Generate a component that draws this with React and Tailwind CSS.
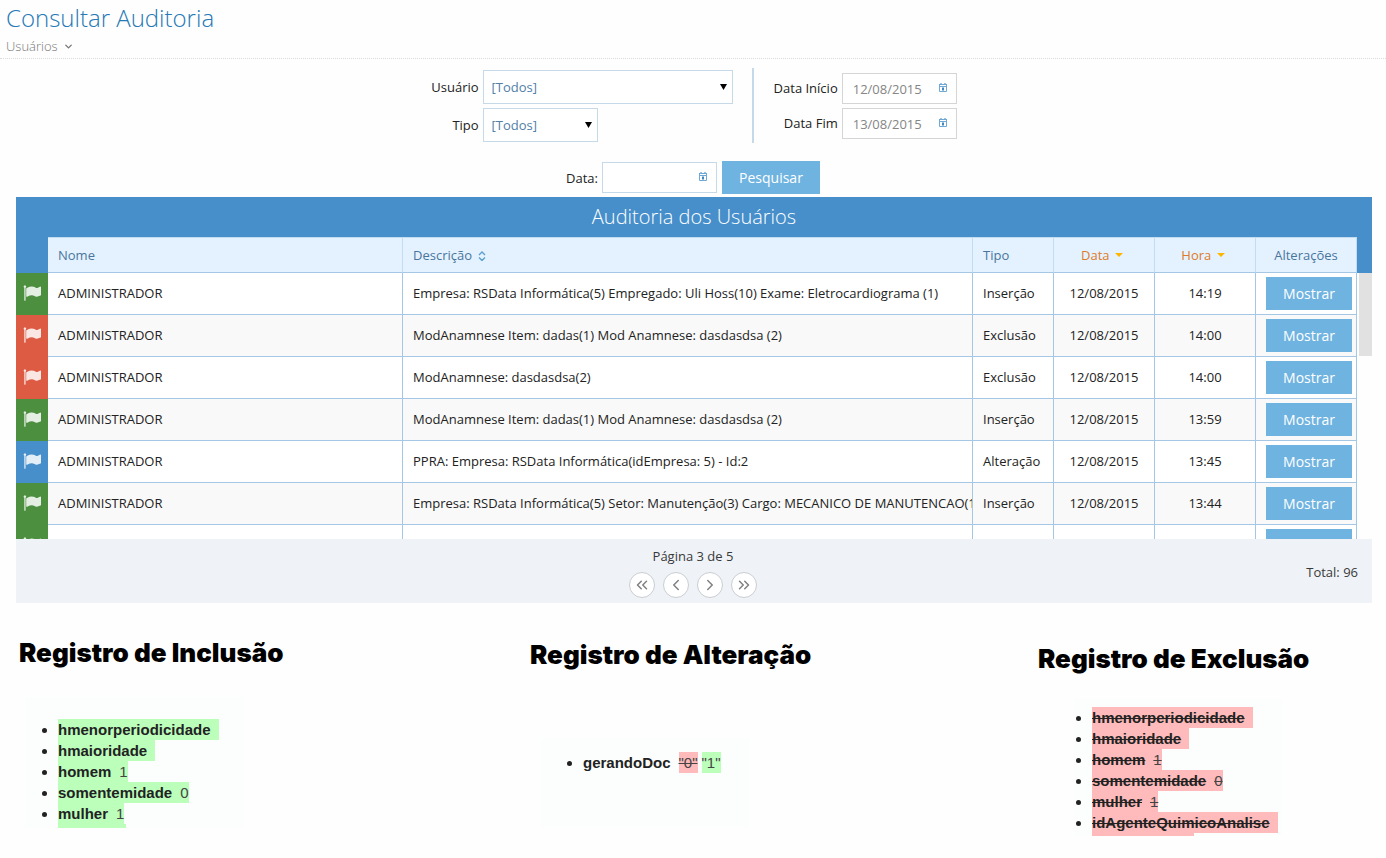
import { useState } from "react";
import { ChevronDown, ChevronLeft, ChevronRight, ChevronsLeft, ChevronsRight } from "lucide-react";

const rows = [
  { flag: "green", desc: "Empresa: RSData Informática(5) Empregado: Uli Hoss(10) Exame: Eletrocardiograma (1)", tipo: "Inserção", hora: "14:19" },
  { flag: "red", desc: "ModAnamnese Item: dadas(1) Mod Anamnese: dasdasdsa (2)", tipo: "Exclusão", hora: "14:00" },
  { flag: "red", desc: "ModAnamnese: dasdasdsa(2)", tipo: "Exclusão", hora: "14:00" },
  { flag: "green", desc: "ModAnamnese Item: dadas(1) Mod Anamnese: dasdasdsa (2)", tipo: "Inserção", hora: "13:59" },
  { flag: "blue", desc: "PPRA: Empresa: RSData Informática(idEmpresa: 5) - Id:2", tipo: "Alteração", hora: "13:45" },
  { flag: "green", desc: "Empresa: RSData Informática(5) Setor: Manutenção(3) Cargo: MECANICO DE MANUTENCAO(1)", tipo: "Inserção", hora: "13:44" },
  { flag: "green", desc: "Empresa: RSData Informática(5)", tipo: "Inserção", hora: "13:44" },
];

const flagColors = {
  green: "bg-[#4b8f3f]",
  red: "bg-[#dd5a43]",
  blue: "bg-[#478fca]",
};

const incluidos = [
  { name: "hmenorperiodicidade" },
  { name: "hmaioridade" },
  { name: "homem", value: "1" },
  { name: "somentemidade", value: "0" },
  { name: "mulher", value: "1" },
];

const excluidos = [...incluidos, { name: "idAgenteQuimicoAnalise" }];

const FlagIcon = () => (
  <svg className="mx-auto h-[18px] w-[18px]" viewBox="0 0 1792 1792" fill="#fff" fillOpacity="0.85">
    <path d="M320 256q0 72-64 110v1266q0 13-9.5 22.5t-22.5 9.5h-64q-13 0-22.5-9.5t-9.5-22.5v-1266q-64-38-64-110 0-53 37.5-90.5t90.5-37.5 90.5 37.5 37.5 90.5zm1472 64v763q0 25-12.5 38.5t-39.5 27.5q-215 116-369 116-61 0-123.5-22t-108.5-48-115.5-48-142.5-22q-192 0-464 146-17 9-33 9-26 0-45-19t-19-45v-742q0-32 31-55 21-14 79-43 236-120 421-120 107 0 200 29t219 88q38 19 88 19 54 0 117.5-21t110-47 88-47 54.5-21q26 0 45 19t19 45z" />
  </svg>
);

const CalendarIcon = () => (
  <svg className="pointer-events-none absolute top-[10px] right-[10px] h-[9px] w-2" viewBox="0 0 8 9" fill="none">
    <path d="M0 1.5h8M0 3.5h8M.5 1.5v7h7v-7" stroke="#6fa9d6" />
    <path d="M2 0v2M6 0v2" stroke="#6fa9d6" strokeWidth="1.4" />
    <path d="M3 4.500h2v3H3z" fill="#3f88c2" />
  </svg>
);

const SelectBox = ({ id, className }) => (
  <div className={`relative h-[34px] ${className}`}>
    <select id={id} className="h-full w-full appearance-none border border-[#c5d9e8] bg-white px-2 text-[13px] text-[#5180a8] outline-none">
      <option>[Todos]</option>
    </select>
    <svg className="pointer-events-none absolute top-[14px] right-[6px] h-[6px] w-[7px]" viewBox="0 0 7 6">
      <path d="M0 0h7L3.5 6z" fill="#000" />
    </svg>
  </div>
);

const DateBox = ({ id, initial, className }) => {
  const [value, setValue] = useState(initial);

  return (
    <div className="relative h-[31px] w-[115px]">
      <input
        id={id}
        type="text"
        value={value}
        onChange={(e) => setValue(e.target.value)}
        className={`h-full w-full border bg-white pl-[10px] text-[13px] text-[#858585] outline-none ${className}`}
      />
      <CalendarIcon />
    </div>
  );
};

const HeaderCell = ({ children, className }) => (
  <th className={`h-9 border-t border-r border-b border-t-[#c3dcf0] border-r-[#c3dcf0] border-b-[#a3c7e4] bg-[#e4f2ff] px-[10px] font-normal ${className}`}>
    {children}
  </th>
);

const cell = "h-[42px] overflow-hidden border-r border-b border-[#a3c7e4] px-[10px] pb-[2px] whitespace-nowrap";

const SortDown = () => (
  <svg className="mr-1 mb-[3px] ml-[2px] inline-block h-1 w-2" viewBox="0 0 8 4">
    <path d="M0 0h8L4 4z" fill="#ffb400" />
  </svg>
);

const PageButton = ({ label, icon: Icon }) => (
  <button
    type="button"
    aria-label={label}
    className="flex h-[26px] w-[26px] items-center justify-center rounded-full border border-[#c9cdd1] bg-white text-[#808080] hover:bg-gray-100"
  >
    <Icon size={18} strokeWidth={2} />
  </button>
);

const ChangeList = ({ items, highlight, strike }) => (
  <ul className="list-disc">
    {items.map((item) => (
      <li key={item.name} className="h-[21px]">
        <span className={`inline-block h-[21px] align-top ${highlight}`}>
          <span className={strike}>
            <b className="font-bold">{item.name}</b>
          </span>
          <span className={`ml-2 text-[#444] ${strike}`}>{item.value}</span>
        </span>
      </li>
    ))}
  </ul>
);

const RecordTitle = ({ children }) => (
  <h2 className="font-['Inter',sans-serif] text-[26px] leading-8 font-black whitespace-nowrap text-black">{children}</h2>
);

const App = () => {
  return (
    <div className="min-h-screen bg-[#fefefe] font-['Open_Sans',sans-serif] text-[13px] leading-5 text-[#222]">
      <header className="border-b border-dotted border-[#dcdcdc] pb-[2px] pl-[6px]">
        <h1 className="pt-[2px] text-2xl leading-8 font-light text-[#2679b5]">Consultar Auditoria</h1>
        <button type="button" className="mt-[2px] flex items-center gap-[5px] font-light text-[#777]">
          Usuários
          <ChevronDown size={11} strokeWidth={3} />
        </button>
      </header>

      {/* Filtros */}
      <form onSubmit={(e) => e.preventDefault()}>
        <div className="mt-[9px] flex justify-center pl-[2px]">
          <div className="grid grid-cols-[auto_250px] content-start items-center gap-1 pt-[2px] text-right">
            <label htmlFor="usuario">Usuário</label>
            <SelectBox id="usuario" className="w-[250px]" />
            <label htmlFor="tipo">Tipo</label>
            <SelectBox id="tipo" className="w-[115px]" />
          </div>
          <div className="ml-[19px] grid h-[75px] grid-cols-[auto_115px] content-start items-center gap-1 border-l-2 border-[#c5d9e8] pt-[5px] pl-5 text-right">
            <label htmlFor="inicio" className="pb-[2px]">Data Início</label>
            <DateBox id="inicio" initial="12/08/2015" className="border-[#d5d5d5]" />
            <label htmlFor="fim" className="pb-[2px]">Data Fim</label>
            <DateBox id="fim" initial="13/08/2015" className="border-[#d5d5d5]" />
          </div>
        </div>
        <div className="mt-[18px] flex items-center justify-center">
          <label htmlFor="data" className="mr-1">Data:</label>
          <DateBox id="data" initial="" className="border-[#c5d9e8]" />
          <button type="submit" className="ml-[5px] h-[33px] w-[98px] bg-[#6fb3e0] text-sm text-white hover:bg-[#4f99c6]">
            Pesquisar
          </button>
        </div>
      </form>

      {/* Tabela */}
      <section className="mt-[3px] mr-[14px] ml-4">
        <h2 className="h-10 bg-[#478fca] text-center text-xl leading-10 font-light text-white">Auditoria dos Usuários</h2>
        <div className="flex max-h-[302px] overflow-hidden">
          <table className="w-full table-fixed border-separate border-spacing-0">
            <colgroup>
              <col className="w-8" />
              <col className="w-[355px]" />
              <col />
              <col className="w-[81px]" />
              <col className="w-[101px]" />
              <col className="w-[101px]" />
              <col className="w-[101px]" />
            </colgroup>
            <thead>
              <tr className="text-[#49759c]">
                <th className="bg-[#478fca]"></th>
                <HeaderCell className="text-left">Nome</HeaderCell>
                <HeaderCell className="text-left">
                  Descrição
                  <svg className="mb-[2px] ml-[6px] inline-block h-[10px] w-2" viewBox="0 0 8 10" fill="none" stroke="#5a9fd0" strokeWidth="1.4">
                    <path d="M1 4l3-3 3 3M1 6.5l3 3 3-3" />
                  </svg>
                </HeaderCell>
                <HeaderCell className="text-left">Tipo</HeaderCell>
                <HeaderCell className="text-center text-[#de7a2a]">
                  Data <SortDown />
                </HeaderCell>
                <HeaderCell className="text-center text-[#de7a2a]">
                  Hora <SortDown />
                </HeaderCell>
                <HeaderCell className="text-center">Alterações</HeaderCell>
              </tr>
            </thead>
            <tbody>
              {rows.map((row, i) => (
                <tr key={i} className="bg-white even:bg-[#f9f9f9]">
                  <td className={`pb-[2px] ${flagColors[row.flag]}`}>
                    <FlagIcon />
                  </td>
                  <td className={cell}>ADMINISTRADOR</td>
                  <td className={cell}>{row.desc}</td>
                  <td className={cell}>{row.tipo}</td>
                  <td className={`${cell} text-center`}>12/08/2015</td>
                  <td className={`${cell} text-center`}>{row.hora}</td>
                  <td className="border-r border-b border-[#a3c7e4] pr-1 pl-[10px]">
                    <button type="button" className="block h-[33px] w-full bg-[#6fb3e0] text-sm text-white hover:bg-[#4f99c6]">
                      Mostrar
                    </button>
                  </td>
                </tr>
              ))}
            </tbody>
          </table>
          <div className="w-[15px] shrink-0">
            <div className="h-9 bg-[#478fca]"></div>
            <div className="ml-[2px] h-[83px] bg-[#e1e1e1]"></div>
          </div>
        </div>
        <footer className="grid h-16 grid-cols-3 items-center bg-[#eff3f8] pt-[2px] text-[#393939]">
          <div className="col-start-2 flex flex-col items-center gap-[6px] pr-[2px]">
            <span>Página 3 de 5</span>
            <nav className="flex gap-2">
              <PageButton label="Primeira página" icon={ChevronsLeft} />
              <PageButton label="Página anterior" icon={ChevronLeft} />
              <PageButton label="Próxima página" icon={ChevronRight} />
              <PageButton label="Última página" icon={ChevronsRight} />
            </nav>
          </div>
          <span className="pr-[14px] text-right">Total: 96</span>
        </footer>
      </section>

      {/* Registros */}
      <div className="grid grid-cols-[511fr_508fr_348fr] pt-[34px] pl-[19px]">
        <section>
          <RecordTitle>Registro de Inclusão</RecordTitle>
          <div className="mt-7 ml-[6px] w-[219px] bg-[#fcfefd] pt-[22px] pl-[33px] font-['Liberation_Sans',sans-serif] text-[15px] leading-[21px]">
            <ChangeList items={incluidos} highlight="bg-[#bbffbb]" strike="" />
            <div className="h-1 w-[68px] bg-[#bbffbb]"></div>
          </div>
        </section>
        <section className="pt-[2px]">
          <RecordTitle>Registro de Alteração</RecordTitle>
          <div className="mt-[67px] ml-[11px] h-[89px] w-[208px] bg-[#fcfefd] pt-[14px] pl-[42px] font-['Liberation_Sans',sans-serif] text-[15px] leading-[21px]">
            <ul className="list-disc">
              <li>
                <b className="font-bold">gerandoDoc</b>
                <del className="ml-2 inline-block bg-[#ffbbbb] text-[#444] line-through">"0"</del>
                <ins className="ml-1 inline-block bg-[#bbffbb] text-[#444] no-underline">"1"</ins>
              </li>
            </ul>
          </div>
        </section>
        <section className="pt-[6px]">
          <RecordTitle>Registro de Exclusão</RecordTitle>
          <div className="mt-6 ml-9 w-[208px] bg-[#fcfefd] pt-2 pl-[18px] font-['Liberation_Sans',sans-serif] text-[15px] leading-[21px]">
            <ChangeList items={excluidos} highlight="bg-[#ffbbbb]" strike="line-through" />
            <div className="h-[3px] w-[102px] bg-[#ffbbbb]"></div>
          </div>
        </section>
      </div>
    </div>
  );
};

export default App;
